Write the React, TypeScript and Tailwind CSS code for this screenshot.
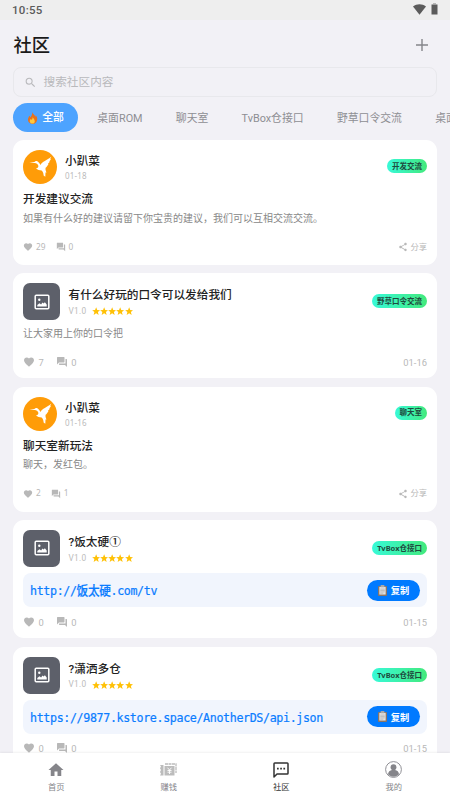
import type { ReactNode } from 'react'
import { MdFavorite, MdForum, MdHome, MdSearch, MdShare } from 'react-icons/md'

type Post = {
  id: number
  kind: 'topic' | 'app'
  title: string
  author?: string
  body?: string
  link?: string
  tag: string
  date: string
  likes: number
  comments: number
}

const tabs = ['桌面ROM', '聊天室', 'TvBox仓接口', '野草口令交流', '桌面']

const posts: Post[] = [
  {
    id: 1,
    kind: 'topic',
    author: '小趴菜',
    title: '开发建议交流',
    body: '如果有什么好的建议请留下你宝贵的建议，我们可以互相交流交流。',
    tag: '开发交流',
    date: '01-18',
    likes: 29,
    comments: 0,
  },
  {
    id: 2,
    kind: 'app',
    title: '有什么好玩的口令可以发给我们',
    body: '让大家用上你的口令把',
    tag: '野草口令交流',
    date: '01-16',
    likes: 7,
    comments: 0,
  },
  {
    id: 3,
    kind: 'topic',
    author: '小趴菜',
    title: '聊天室新玩法',
    body: '聊天，发红包。',
    tag: '聊天室',
    date: '01-16',
    likes: 2,
    comments: 1,
  },
  {
    id: 4,
    kind: 'app',
    title: '?饭太硬①',
    link: 'http://饭太硬.com/tv',
    tag: 'TvBox仓接口',
    date: '01-15',
    likes: 0,
    comments: 0,
  },
  {
    id: 5,
    kind: 'app',
    title: '?潇洒多仓',
    link: 'https://9877.kstore.space/AnotherDS/api.json',
    tag: 'TvBox仓接口',
    date: '01-15',
    likes: 0,
    comments: 0,
  },
]

function FireIcon() {
  return (
    <svg viewBox="0 0 24 26" className="w-[11px] h-[12px] shrink-0">
      <path
        d="M11 0c1 4 6 6 7 10 1-1 1-2 1-3 3 4 4 7 3 11-1 5-5 8-10 8S2 23 2 17c0-4 2-6 3-9 1 1 2 2 2 4 3-3 5-7 4-12z"
        fill="#e8721c"
      />
      <path d="M12 9c0 4 5 6 5 11 0 3-2 5-5 5s-6-2-6-5c0-2 1-3 2-5l2 2c2-2 3-5 2-8z" fill="#ffc93c" />
    </svg>
  )
}

function ClipboardIcon() {
  return (
    <svg viewBox="0 0 20 24" className="w-[9px] h-[11px] shrink-0">
      <rect x="0" y="2" width="20" height="22" rx="2" fill="#8a7566" />
      <rect x="3" y="4" width="14" height="17" fill="#e3e3e3" />
      <rect x="6" y="0" width="8" height="5" rx="1" fill="#a9a9a9" />
      <path d="M5 9h10M5 12h10M5 15h10M5 18h7" stroke="#a0a0a0" strokeWidth="1.2" />
    </svg>
  )
}

function BirdAvatar() {
  return (
    <svg viewBox="0 0 34 34" className="w-[34px] h-[34px] shrink-0">
      <circle cx="17" cy="17" r="17" fill="#ff9c08" />
      <path
        d="M6.3 12.9 11.4 12.100c.8-1.200 2.200-1.300 3.300-.6 1.200.8 2 2.300 2.800 3.400C19 11.500 24 10.200 28.300 6.700l-1.200 2.500 1 .1-2 2.300.8.1-2 2 .6.200c-1 1.900-1.900 3-2.900 3.900-.3 1.600.1 3.100.9 4.800l-1-.1-.2 4.300-1.700-1.300c0-2-.6-3.600-2-4.900-2.100-.1-4.100-.7-5.700-2 1.500-.6 2.400-1.300 2.500-2.700-.4-1.600-1.600-2.600-3.800-2.900z"
        fill="#fff"
      />
    </svg>
  )
}

function AppThumb() {
  return (
    <div className="flex items-center justify-center w-[37px] h-[37px] rounded-[7px] bg-[#5d606a] shrink-0">
      <svg viewBox="0 0 16 16" className="w-4 h-4">
        <rect x="1.2" y="1.2" width="13.6" height="13.6" rx="1" fill="none" stroke="#fff" strokeWidth="1.5" />
        <circle cx="5.3" cy="5.8" r="1.2" fill="#fff" />
        <path d="M3.3 12.6V11l2.2-1.7 1.6 1.100 1.400-1.800 1 1 1.400-1.400 1.800 2.400v2z" fill="#fff" />
      </svg>
    </div>
  )
}

function Stars() {
  return (
    <div className="flex">
      {[0, 1, 2, 3, 4].map((n) => (
        <svg key={n} viewBox="0 0 25 25" className="w-[8.3px] h-[8.3px]">
          <path
            d="M12.5 1l3.3 8.2 8.7.5-6.7 5.6 2.2 8.5-7.5-4.7L5 23.8l2.2-8.500L.5 9.700l8.700-.5z"
            fill="#ffc107"
          />
        </svg>
      ))}
    </div>
  )
}

function Tag({ children }: { children: ReactNode }) {
  return (
    <span className="flex items-center h-[14px] px-[5px] pt-[1px] rounded-full bg-gradient-to-r from-[#38f9d7] to-[#43e97b] font-['Noto_Sans','Noto_Sans_CJK_SC',sans-serif] text-[7.5px] font-bold text-[#1f4a3e] whitespace-nowrap">
      {children}
    </span>
  )
}

function TopicCard({ post }: { post: Post }) {
  return (
    <article className="h-[125px] shrink-0 rounded-[11px] bg-white px-[10px] pt-[10px]">
      <div className="flex h-[34px]">
        <BirdAvatar />
        <div className="ml-[8px] flex-1">
          <div className="mt-[3px] h-[17px] text-[11.67px] leading-[17px] font-medium text-[#222]">{post.author}</div>
          <div className="h-[12px] font-['Noto_Sans',sans-serif] text-[8px] leading-[12px] tracking-[0.2px] text-[#bbb]">
            {post.date}
          </div>
        </div>
        <div className="mt-[9px]">
          <Tag>{post.tag}</Tag>
        </div>
      </div>
      <h2 className="mt-[7px] h-[17px] text-[11.67px] leading-[17px] font-medium text-[#222]">{post.title}</h2>
      <p className="mt-[2.500px] h-[16px] text-[10px] leading-[16px] text-[#888]">{post.body}</p>
      <div className="mt-[14.500px] flex h-[12px] items-center font-['Noto_Sans','Noto_Sans_CJK_SC',sans-serif] text-[8.3px] text-[#b8b8b8]">
        <MdFavorite className="w-[10px] h-[10px]" />
        <span className="ml-[3px]">{post.likes}</span>
        <MdForum className="ml-[10.500px] w-[10px] h-[10px]" />
        <span className="ml-[2.500px]">{post.comments}</span>
        <MdShare className="ml-auto w-[10px] h-[10px]" />
        <span className="ml-[2.500px]">分享</span>
      </div>
    </article>
  )
}

function AppCard({ post }: { post: Post }) {
  return (
    <article
      className={`${post.link ? 'h-[118.500px]' : 'h-[105px]'} shrink-0 rounded-[11px] bg-white px-[10px] pt-[10px]`}
    >
      <div className="flex h-[37px]">
        <AppThumb />
        <div className="ml-[8.500px] flex-1">
          <h2 className="mt-[4px] h-[17px] text-[11.67px] leading-[17px] font-medium text-[#222]">{post.title}</h2>
          <div className="mt-[1px] flex h-[12px] items-center text-[8.3px] tracking-[0.3px] text-[#bbb]">
            <span className="w-[23px]">V1.0</span>
            <Stars />
          </div>
        </div>
        <div className="mt-[11px]">
          <Tag>{post.tag}</Tag>
        </div>
      </div>
      {post.link ? (
        <div className="mt-[6.300px] flex h-[34px] items-center justify-between rounded-[8px] bg-[#f1f5fd] px-[7px]">
          <span className="mt-[3px] scale-y-110 font-['DejaVu_Sans_Mono','Noto_Sans_CJK_SC',monospace] text-[11.67px] tracking-[-0.36px] font-medium text-[#0a7cff] [-webkit-text-stroke:0.2px_#0a7cff] whitespace-nowrap">
            {post.link}
          </span>
          <button className="flex h-[21px] w-[53px] items-center justify-center gap-[4px] rounded-full bg-[#007aff] text-[9.2px] font-bold text-white">
            <ClipboardIcon />
            <span className="pt-[1px]">复制</span>
          </button>
        </div>
      ) : (
        <p className="mt-[6px] h-[16px] text-[10px] leading-[16px] text-[#888]">{post.body}</p>
      )}
      <div
        className={`${post.link ? 'mt-[7.500px]' : 'mt-[12.500px]'} flex h-[14px] items-center text-[9.4px] text-[#b8b8b8]`}
      >
        <MdFavorite className="w-[12px] h-[12px]" />
        <span className="ml-[3.500px] pt-[2px]">{post.likes}</span>
        <MdForum className="ml-[12.500px] w-[12px] h-[12px]" />
        <span className="ml-[3px] pt-[2px]">{post.comments}</span>
        <span className="ml-auto pt-[2px]">{post.date}</span>
      </div>
    </article>
  )
}

function NavItem({ label, active, children }: { label: string; active?: boolean; children: ReactNode }) {
  return (
    <div className={`flex flex-1 flex-col items-center pt-[7px] ${active ? 'text-[#333]' : 'text-[#85858a]'}`}>
      <div className="flex h-[19px] items-center justify-center">{children}</div>
      <span className="mt-[1px] text-[8.3px] leading-[14px]">{label}</span>
    </div>
  )
}

export default function App() {
  return (
    <div className="flex h-[800px] w-[450px] flex-col overflow-hidden bg-[#f2f1f6] font-[Roboto,'Noto_Sans_CJK_SC',sans-serif]">
      {/* Status bar */}
      <div className="flex h-[20px] shrink-0 items-center bg-[#eee] px-[12px] text-[#5b5b5b]">
        <span className="pt-[1px] text-[11.500px] font-medium tracking-[0.3px]">10:55</span>
        <svg viewBox="0 0 13 11" className="mt-[-2px] ml-auto w-[13px] h-[11px]">
          <path d="M0 2.500C3.800-.5 9.200-.5 13 2.500L6.500 10.800z" fill="currentColor" />
        </svg>
        <svg viewBox="0 0 7 12" className="mt-[-2px] ml-[5px] w-[7px] h-[12px]">
          <path d="M2 0h3v1.200H2z" fill="#b5b5b5" />
          <path d="M.5 1.500h6V11.500h-6z" fill="currentColor" />
        </svg>
      </div>

      {/* Title */}
      <header className="flex h-[47px] shrink-0 items-center justify-between pl-[13.500px] pr-[22px] pt-[4px]">
        <h1 className="pt-[1px] text-[18.3px] font-medium text-[#1a1a1a]">社区</h1>
        <svg viewBox="0 0 12 12" className="mt-[-1px] w-[12px] h-[12px]">
          <path d="M6 0v12M0 6h12" stroke="#85858a" strokeWidth="1.400" />
        </svg>
      </header>

      {/* Search */}
      <div className="mx-[13px] flex h-[30px] shrink-0 items-center rounded-[8px] border border-[#e8e8ec] pl-[10px] text-[#b9b9bc]">
        <MdSearch className="w-[13px] h-[13px]" />
        <span className="ml-[6.500px] pt-[2px] text-[11.67px]">搜索社区内容</span>
      </div>

      {/* Category tabs */}
      <div className="mt-[6px] flex h-[29px] shrink-0 items-center gap-[33.300px] overflow-hidden pl-[13px] text-[10.83px] whitespace-nowrap text-[#8e8e93]">
        <div className="mr-[-14px] flex h-[29px] w-[65px] shrink-0 items-center justify-center gap-[4px] rounded-full bg-[#4da3ff] font-medium text-white">
          <FireIcon />
          <span className="pt-[2px]">全部</span>
        </div>
        {tabs.map((tab) => (
          <span key={tab} className="pt-[3px]">
            {tab}
          </span>
        ))}
      </div>

      {/* Posts */}
      <main className="mt-[8px] flex min-h-0 flex-1 flex-col gap-[8.3px] overflow-hidden px-[13px]">
        {posts.map((post) =>
          post.kind === 'topic' ? <TopicCard key={post.id} post={post} /> : <AppCard key={post.id} post={post} />
        )}
      </main>

      {/* Bottom navigation */}
      <nav className="relative flex h-[47px] shrink-0 bg-white shadow-[0_-1px_2px_rgba(0,0,0,0.06)]">
        <NavItem label="首页">
          <MdHome className="w-[18px] h-[18px]" />
        </NavItem>
        <NavItem label="赚钱">
          <svg viewBox="0 0 17 13" className="w-[17px] h-[13px]" fill="none" stroke="#bcbcbc">
            <path d="M5 1h11v9" strokeWidth="1.300" strokeDasharray="3 .5" />
            <path d="M0 2h3.500v10.500H0l1-1.800-1-1.800 1-1.800-1-1.800 1-1.800z" fill="#bcbcbc" stroke="none" />
            <path d="M4.500 3h10v9.500h-10z" fill="#bcbcbc" stroke="none" />
            <path d="M7.500 4.700l2 2.300 2-2.300M9.500 7v4M7.500 7.500h4M7.500 9.200h4" stroke="#fff" strokeWidth=".9" />
          </svg>
        </NavItem>
        <NavItem label="社区" active>
          <svg viewBox="0 0 16 16" className="w-[16px] h-[16px]">
            <path
              d="M1 15V1.800Q1 1 1.800 1h12.400q.8 0 .8.800v9.400q0 .8-.8.800H4z"
              fill="none"
              stroke="currentColor"
              strokeWidth="1.500"
              strokeLinejoin="round"
            />
            <path d="M4 5.800h1.700v1.600H4zM7.200 5.800h1.700v1.600H7.200zM10.400 5.800h1.700v1.600h-1.700z" fill="currentColor" />
          </svg>
        </NavItem>
        <NavItem label="我的">
          <svg viewBox="0 0 17 17" className="w-[17px] h-[17px]">
            <circle cx="8.500" cy="8.500" r="7.900" fill="none" stroke="currentColor" strokeWidth=".9" />
            <circle cx="8.500" cy="6.200" r="2.900" fill="currentColor" />
            <path
              d="M3 13.300c0-2.500 2-3.900 4-4.300h3c2 .4 4 1.800 4 4.300-1.500 1.600-3.300 2.400-5.500 2.400S4.500 14.900 3 13.300z"
              fill="currentColor"
            />
          </svg>
        </NavItem>
      </nav>
    </div>
  )
}
